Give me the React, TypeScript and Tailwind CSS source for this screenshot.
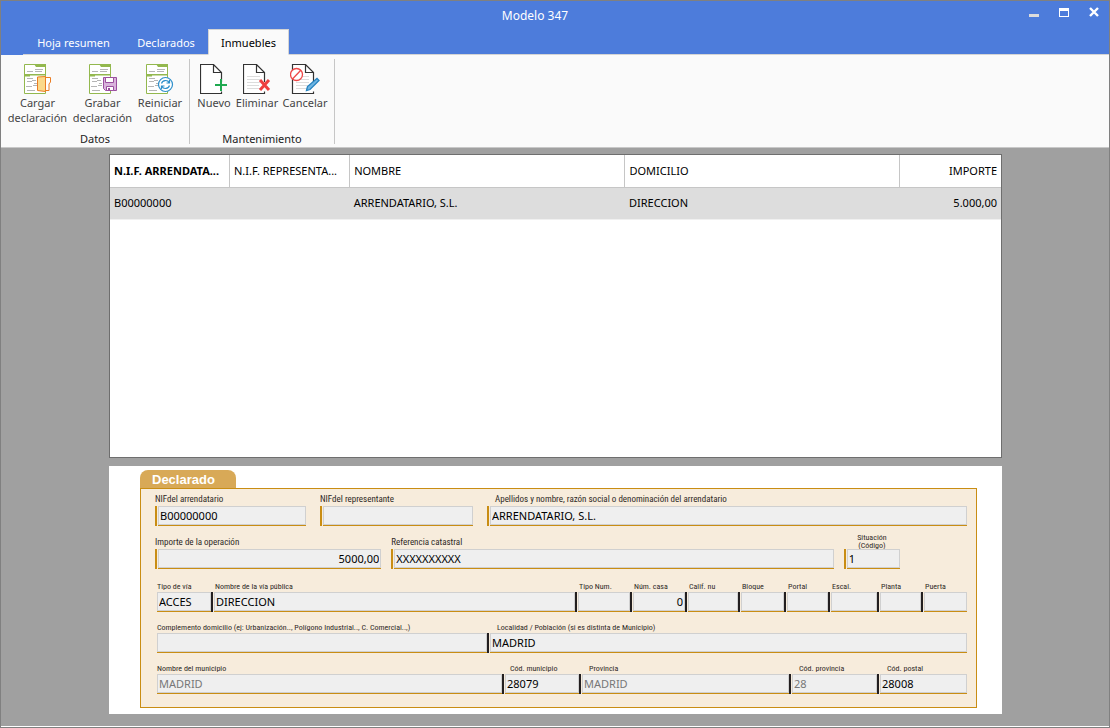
import React, { useId, useState } from "react";

const UI = "font-['Noto_Sans','Open_Sans',sans-serif]";

function SheetBase() {
  return (
    <>
      <path d="M.5.5h21v29H.5z" fill="#fff" stroke="#93b84e" />
      <path d="M10 0h12v3H12zM0 10h22v1.500h-16v1H0z" fill="#93b84e" />
      <path d="M3 7.500h6M11 5.500h8M11 7.500h7M3 14.500h6M3 17.500h5M8 16.500h4M10 19.500h3M2 22.500h6M9 21.500h4M3 26.500h8" stroke="#b5b5b5" />
    </>
  );
}

function LoadIcon() {
  return (
    <svg width="28" height="30" viewBox="0 0 28 30" fill="none" aria-hidden="true">
      <SheetBase />
      <path d="M21.500 13.500h5v4.500l-1.500 2v6.500h-3.500" fill="#fff" stroke="#ea7d24" />
      <path d="M13.500 13 21.500 12.500v15l-8-1z" fill="#fbd98a" stroke="#ea7d24" />
    </svg>
  );
}

function SaveIcon() {
  return (
    <svg width="28" height="30" viewBox="0 0 28 30" fill="none" aria-hidden="true">
      <SheetBase />
      <path d="M14.500 13.500h13v13h-11l-2-2z" fill="#d9b3dc" stroke="#9b4f9f" />
      <path d="M16.500 13.500h8v5h-8zM17.500 22.500h7v4h-7z" fill="#fff" stroke="#9b4f9f" />
      <path d="M19 24h2v2h-2z" fill="#9b4f9f" />
    </svg>
  );
}

function ResetIcon() {
  return (
    <svg width="28" height="30" viewBox="0 0 28 30" fill="none" aria-hidden="true">
      <SheetBase />
      <circle cx="19.500" cy="20.500" r="7" fill="#fff" stroke="#2d8fcb" strokeWidth="1.200" />
      <path d="M15.500 19.500c1-3.500 6-4 7.500-1M23.500 16v3h-3M23.500 21.500c-1 3.500-6 4-7.500 1M15.500 25v-3h3" stroke="#2d8fcb" strokeWidth="1.200" />
    </svg>
  );
}

function PageBase() {
  return (
    <path d="M21.500 18V8.500L13.500.5H.5v29h21v-2M13.500.5v8h8" fill="#fff" stroke="#333" strokeWidth="1.200" />
  );
}

function TextLines() {
  return <path d="M4 12.500h13M4 15.500h13M4 18.500h13M4 21.500h12M4 24.500h13" stroke="#dcdcdc" />;
}

function NewIcon() {
  return (
    <svg width="28" height="30" viewBox="0 0 28 30" fill="none" aria-hidden="true">
      <PageBase />
      <path d="M21 15v12M15 21h12" stroke="#1fa950" strokeWidth="2" />
    </svg>
  );
}

function DeleteIcon() {
  return (
    <svg width="28" height="30" viewBox="0 0 28 30" fill="none" aria-hidden="true">
      <PageBase />
      <TextLines />
      <path d="m17 16 9 10M26 16l-9 10" stroke="#ee3e3e" strokeWidth="3" />
    </svg>
  );
}

function CancelIcon() {
  return (
    <svg width="30" height="30" viewBox="-2 0 30 30" fill="none" aria-hidden="true">
      <PageBase />
      <TextLines />
      <circle cx="4.500" cy="10.500" r="6" fill="#fff" stroke="#ee4848" strokeWidth="1.300" />
      <path d="m.5 15 8.500-9" stroke="#ee4848" strokeWidth="1.300" />
      <path d="m14.500 26.500 1-4 9.500-8 2 2-9 9z" fill="#6fb5e2" stroke="#2683c0" strokeWidth="1.300" />
    </svg>
  );
}

function RibbonButton({ icon, lines, className }: { icon: React.ReactNode; lines: string[]; className: string }) {
  return (
    <button type="button" className={`flex flex-col items-center text-[11px] leading-[15px] text-[#444] ${className}`}>
      {icon}
      <span className="mt-px whitespace-nowrap">
        {lines.map((line) => (
          <span key={line} className="block">{line}</span>
        ))}
      </span>
    </button>
  );
}

function RibbonGroup({ title, children }: { title: string; children: React.ReactNode }) {
  return (
    <section className="mt-1 mb-[3px] flex flex-col justify-between border-r border-[#c6c6c6] pt-[5px]">
      <div className="flex items-start">{children}</div>
      <h2 className="text-center text-[11px] leading-[11px] text-[#222]">{title}</h2>
    </section>
  );
}

type FieldProps = {
  label: React.ReactNode;
  value?: string;
  bar?: "gold" | "dark" | "none";
  wide?: boolean;
  right?: boolean;
  disabled?: boolean;
  labelClass?: string;
};

function Field({ label, value = "", bar = "dark", wide, right, disabled, labelClass = "pl-1" }: FieldProps) {
  const id = useId();
  const [text, setText] = useState(value);
  const barClass =
    bar === "gold" ? "border-l-2 border-l-[#c98d13] pl-px" : bar === "dark" ? "border-l-2 border-l-[#231f20] pl-px" : "";
  return (
    <div className="flex min-w-0 flex-col justify-end">
      <label
        htmlFor={id}
        className={`h-[15px] whitespace-nowrap font-['Roboto_Condensed','Liberation_Sans',sans-serif] text-[#2e2926] ${wide ? "text-[9px] leading-[17px]" : "text-[8px] leading-[19px]"} ${labelClass}`}
      >
        {label}
      </label>
      <div className={`h-5 ${barClass}`}>
        <div className="border-b border-[#c98d13]">
          <input
            id={id}
            value={text}
            disabled={disabled}
            onChange={(e) => setText(e.target.value)}
            className={`block h-[19px] w-full border border-[#d0d0d0] bg-[#efefef] px-px text-[11px] leading-[17px] outline-none ${disabled ? "text-[#777]" : "text-black"} ${right ? "text-right" : ""}`}
          />
        </div>
      </div>
    </div>
  );
}

export default function App() {
  const [tab, setTab] = useState("Inmuebles");
  return (
    <div className={`flex min-h-screen flex-col border border-[#808080] bg-[#a0a0a0] text-black ${UI}`}>
      <header className="flex flex-col bg-[#4d7cdb] text-white">
        <div className="grid h-7 grid-cols-[80px_1fr_120px] items-start">
          <h1 className="col-start-2 pt-[7px] text-center text-[12px] leading-4">Modelo 347</h1>
          <div className="flex h-6 items-center justify-end gap-5 pr-[10px] pb-[2px]">
            <button type="button" aria-label="Minimizar" className="flex h-[10px] w-[10px] items-end">
              <span className="h-[3px] w-full bg-[#dcdcdc]" />
            </button>
            <button type="button" aria-label="Maximizar" className="h-[9px] w-[10px] border border-t-[3px] border-white" />
            <button type="button" aria-label="Cerrar">
              <svg width="10" height="10" viewBox="0 0 10 10" aria-hidden="true">
                <path d="m1 1 8 8M9 1 1 9" stroke="#fff" strokeWidth="2.400" />
              </svg>
            </button>
          </div>
        </div>
        <nav className="flex h-[26px] items-stretch pl-[22px] text-[11px]">
          {[
            ["Hoja resumen", "w-[101px]"],
            ["Declarados", "w-[84px]"],
            ["Inmuebles", "w-[81px]"],
          ].map(([name, width]) => (
            <button
              key={name}
              type="button"
              aria-pressed={tab === name}
              onClick={() => setTab(name)}
              className={`border pt-[2px] ${width} ${tab === name ? "border-[#d4d4d4] border-b-[#fafafa] bg-[#fafafa] text-black" : "border-x-0 border-transparent border-b-[#d4d4d4]"}`}
            >
              {name}
            </button>
          ))}
          <span className="flex-1 border-b border-[#d4d4d4]" />
        </nav>
      </header>

      <div className="flex h-[93px] border-b border-[#c8c8c8] bg-[#fafafa]">
        <RibbonGroup title="Datos">
          <RibbonButton className="ml-1 w-[65px]" icon={<LoadIcon />} lines={["Cargar", "declaración"]} />
          <RibbonButton className="w-[65px]" icon={<SaveIcon />} lines={["Grabar", "declaración"]} />
          <RibbonButton className="mr-1 w-[50px]" icon={<ResetIcon />} lines={["Reiniciar", "datos"]} />
        </RibbonGroup>
        <RibbonGroup title="Mantenimiento">
          <RibbonButton className="ml-1 w-[40px]" icon={<NewIcon />} lines={["Nuevo"]} />
          <RibbonButton className="w-[46px]" icon={<DeleteIcon />} lines={["Eliminar"]} />
          <RibbonButton className="mr-1 w-[50px]" icon={<CancelIcon />} lines={["Cancelar"]} />
        </RibbonGroup>
      </div>

      <main className="mr-[107px] ml-[108px] mt-[6px] mb-3 flex flex-1 flex-col gap-2">
        <div className="flex-1 border border-[#6e6e6e] bg-white">
          <table className="w-full table-fixed border-collapse text-left text-[11px] leading-4">
            <colgroup>
              <col className="w-[13.400%]" />
              <col className="w-[13.500%]" />
              <col className="w-[30.900%]" />
              <col className="w-[30.800%]" />
              <col />
            </colgroup>
            <thead>
              <tr className="h-8 border-b border-[#c6c6c6]">
                <th className="whitespace-nowrap border-r border-[#c6c6c6] pl-1 font-bold">N.I.F. ARRENDATA...</th>
                <th className="whitespace-nowrap border-r border-[#c6c6c6] pl-1 font-normal">N.I.F. REPRESENTA...</th>
                <th className="border-r border-[#c6c6c6] px-1 font-normal">NOMBRE</th>
                <th className="border-r border-[#c6c6c6] px-1 font-normal">DOMICILIO</th>
                <th className="px-1 text-right font-normal">IMPORTE</th>
              </tr>
            </thead>
            <tbody>
              <tr className="h-8 border-b border-[#f0f0f0] bg-[#dddddd]">
                <td className="px-1">B00000000</td>
                <td className="px-1" />
                <td className="px-1">ARRENDATARIO, S.L.</td>
                <td className="px-1">DIRECCION</td>
                <td className="px-1 text-right">5.000,00</td>
              </tr>
            </tbody>
          </table>
        </div>

        <form className="bg-white pt-1 pr-[25px] pb-[6px] pl-[31px]" onSubmit={(e) => e.preventDefault()}>
          <h2 className="h-[18px] w-24 rounded-t-lg bg-[#d8a957] pl-3 font-['Liberation_Sans',sans-serif] text-[13px] leading-[19px] font-bold text-white">
            Declarado
          </h2>
          <div className="flex flex-col gap-[6px] border border-[#c98d13] bg-[#f7ecdc] pt-[2px] pr-[9px] pb-[13px] pl-[14px]">
            <div className="mb-[2px] flex flex-col gap-2">
              <div className="grid grid-cols-[151fr_153fr_480fr] gap-x-[14px]">
                <Field wide bar="gold" labelClass="" label="NIFdel arrendatario" value="B00000000" />
                <Field wide bar="gold" labelClass="" label="NIFdel representante" />
                <Field wide bar="gold" labelClass="pl-2" label="Apellidos y nombre, razón social o denominación del arrendatario" value="ARRENDATARIO, S.L." />
              </div>
              <div className="grid grid-cols-[226fr_442fr_56fr_57fr] gap-x-[10px]">
                <Field wide bar="gold" labelClass="" label="Importe de la operación" value="5000,00" right />
                <Field wide bar="gold" labelClass="" label="Referencia catastral" value="XXXXXXXXXX" />
                <Field
                  wide
                  bar="gold"
                  labelClass="text-center"
                  label={
                    <>
                      <span className="block text-[8px] leading-[8px]">Situación</span>
                      <span className="block text-[8px] leading-[8px]">(Código)</span>
                    </>
                  }
                  value="1"
                />
              </div>
            </div>
            <div className="ml-[2px] grid grid-cols-[54fr_364fr_55fr_55fr_53fr_46fr_44fr_49fr_44fr_46fr]">
              <Field bar="none" labelClass="" label="Tipo de vía" value="ACCES" />
              <Field label="Nombre de la vía pública" value="DIRECCION" />
              <Field label="Tipo Num." />
              <Field label="Núm. casa" value="0" right />
              <Field label="Calif. nu" />
              <Field label="Bloque" />
              <Field label="Portal" />
              <Field label="Escal." />
              <Field label="Planta" />
              <Field label="Puerta" />
            </div>
            <div className="ml-[2px] grid grid-cols-[330fr_480fr]">
              <Field bar="none" labelClass="" label="Complemento domicilio (ej: Urbanización.., Polígono Industrial.., C. Comercial..,)" />
              <Field labelClass="pl-[10px]" label="Localidad / Población (si es distinta de Municipio)" value="MADRID" />
            </div>
            <div className="ml-[2px] grid grid-cols-[345fr_77fr_210fr_88fr_90fr]">
              <Field bar="none" labelClass="" label="Nombre del municipio" value="MADRID" disabled />
              <Field labelClass="pl-2" label="Cód. municipio" value="28079" />
              <Field labelClass="pl-[10px]" label="Provincia" value="MADRID" disabled />
              <Field labelClass="pl-[10px]" label="Cód. provincia" value="28" disabled />
              <Field labelClass="pl-[10px]" label="Cód. postal" value="28008" />
            </div>
          </div>
        </form>
      </main>
      <div className="h-px bg-white" />
    </div>
  );
}
